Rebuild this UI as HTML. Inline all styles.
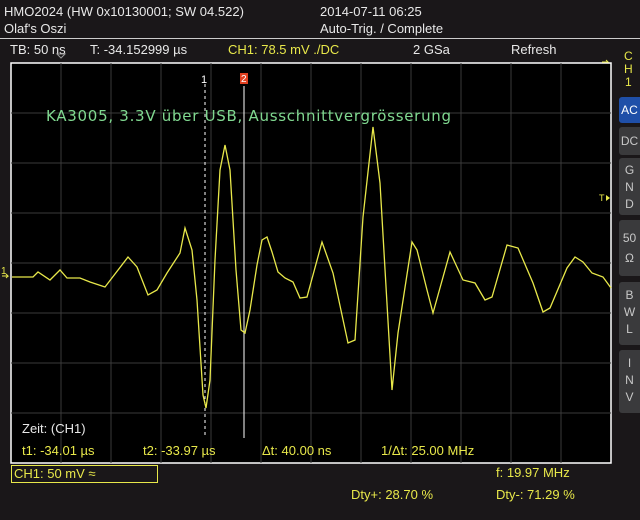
<!DOCTYPE html>
<html><head><meta charset="utf-8"><style>
body{margin:0;width:640px;height:520px;background:#1a1719;overflow:hidden;position:relative;font-family:"Liberation Sans",sans-serif;font-size:13px}
.t{position:absolute;white-space:nowrap;line-height:1}
.w{color:#e8e8e8}.y{color:#e8e84a}
.btn{position:absolute;left:619px;width:21px;background:#3a3a3c;border-radius:3px 0 0 3px;color:#c8c8c8;font-size:12px;text-align:center;line-height:17px}
</style></head><body>
<div class="t w" style="left:4px;top:5px">HMO2024 (HW 0x10130001; SW 04.522)</div>
<div class="t w" style="left:4px;top:22px">Olaf's Oszi</div>
<div class="t w" style="left:320px;top:5px">2014-07-11 06:25</div>
<div class="t w" style="left:320px;top:22px">Auto-Trig. / Complete</div>
<div style="position:absolute;left:0;top:38px;width:640px;height:1px;background:#ccc"></div>
<div class="t w" style="left:10px;top:43px">TB: 50 ns</div>
<div class="t w" style="left:90px;top:43px">T: -34.152999 µs</div>
<div class="t y" style="left:228px;top:43px">CH1: 78.5 mV ./DC</div>
<div class="t w" style="left:413px;top:43px">2 GSa</div>
<div class="t w" style="left:511px;top:43px">Refresh</div>
<div class="t y" style="left:624px;top:50px;font-size:12px;line-height:13px;text-align:center">C<br>H<br>1</div>
<div class="btn" style="top:97px;height:26px;background:#1f4fa8;color:#fff;line-height:26px">AC</div>
<div class="btn" style="top:127px;height:28px;line-height:28px">DC</div>
<div class="btn" style="top:158px;height:57px;padding-top:4px;box-sizing:border-box">G<br>N<br>D</div>
<div class="btn" style="top:220px;height:56px;padding-top:8px;box-sizing:border-box;line-height:20px">50<br>Ω</div>
<div class="btn" style="top:282px;height:63px;padding-top:5px;box-sizing:border-box">B<br>W<br>L</div>
<div class="btn" style="top:350px;height:63px;padding-top:5px;box-sizing:border-box">I<br>N<br>V</div>
<svg style="position:absolute;left:0;top:0" width="640" height="520">
<rect x="11" y="63" width="600" height="400" fill="#000" stroke="#fff" stroke-width="1.5"/>
<g stroke="#3a3a3a" stroke-width="1">
<path d="M61 63V463M111 63V463M161 63V463M211 63V463M261 63V463M311 63V463M361 63V463M411 63V463M461 63V463M511 63V463M561 63V463"/>
<path d="M11 113H611M11 163H611M11 213H611M11 263H611M11 313H611M11 363H611M11 413H611"/>
</g>
<path d="M61 58l-4 -4h8z" fill="none" stroke="#999"/>
<line x1="205" y1="84" x2="205" y2="438" stroke="#fff" stroke-dasharray="3,3"/>
<line x1="244" y1="86" x2="244" y2="438" stroke="#fff"/>
<text x="201" y="83" fill="#fff" font-size="11" font-family="Liberation Sans">1</text>
<rect x="240" y="73" width="8" height="11" fill="#e04020"/>
<text x="241" y="82" fill="#fff" font-size="10" font-family="Liberation Sans">2</text>
<text x="46" y="121" fill="#80d890" font-size="15" font-family="DejaVu Sans, sans-serif" letter-spacing="0.72">KA3005, 3.3V über USB, Ausschnittvergrösserung</text>
<polyline fill="none" stroke="#e8e84a" stroke-width="1.3" points="12,277 33,277 38,272 50,280 60,270 67,278 80,278 90,282 105,287 128,257 137,267 148,295 157,290 167,273 180,253 185,228 192,250 197,300 203,395 206,408 210,380 215,260 220,170 225,145 230,170 236,270 241,330 245,333 250,310 257,265 262,240 267,237 272,252 278,272 285,278 293,282 300,298 307,297 322,242 333,273 348,343 355,340 363,217 373,127 380,183 392,390 398,333 412,242 417,250 427,290 433,313 450,252 463,280 475,283 485,300 492,297 507,245 518,248 533,283 543,312 550,308 567,268 575,257 583,262 592,273 603,277 611,288"/>
<text x="1" y="274" fill="#e8e84a" font-size="10" font-family="Liberation Sans">1</text>
<path d="M2 276h6l-2-2M8 276l-2 2" stroke="#e8e84a" fill="none"/>
<text x="599" y="201" fill="#e8e84a" font-size="9" font-family="Liberation Sans">T</text>
<path d="M606 195l4 3-4 3z" fill="#e8e84a"/>
<path d="M602 62h6l-2-2" stroke="#e8e84a" fill="none"/>
<rect x="11.5" y="465.5" width="146" height="17" fill="none" stroke="#e8e84a"/>
</svg>
<div class="t w" style="left:22px;top:422px">Zeit: (CH1)</div>
<div class="t y" style="left:22px;top:444px">t1: -34.01 µs</div>
<div class="t y" style="left:143px;top:444px">t2: -33.97 µs</div>
<div class="t y" style="left:262px;top:444px">Δt: 40.00 ns</div>
<div class="t y" style="left:381px;top:444px">1/Δt: 25.00 MHz</div>
<div class="t y" style="left:14px;top:467px">CH1: 50 mV ≈</div>
<div class="t y" style="left:496px;top:466px">f: 19.97 MHz</div>
<div class="t y" style="left:351px;top:488px">Dty+: 28.70 %</div>
<div class="t y" style="left:496px;top:488px">Dty-: 71.29 %</div>
</body></html>
